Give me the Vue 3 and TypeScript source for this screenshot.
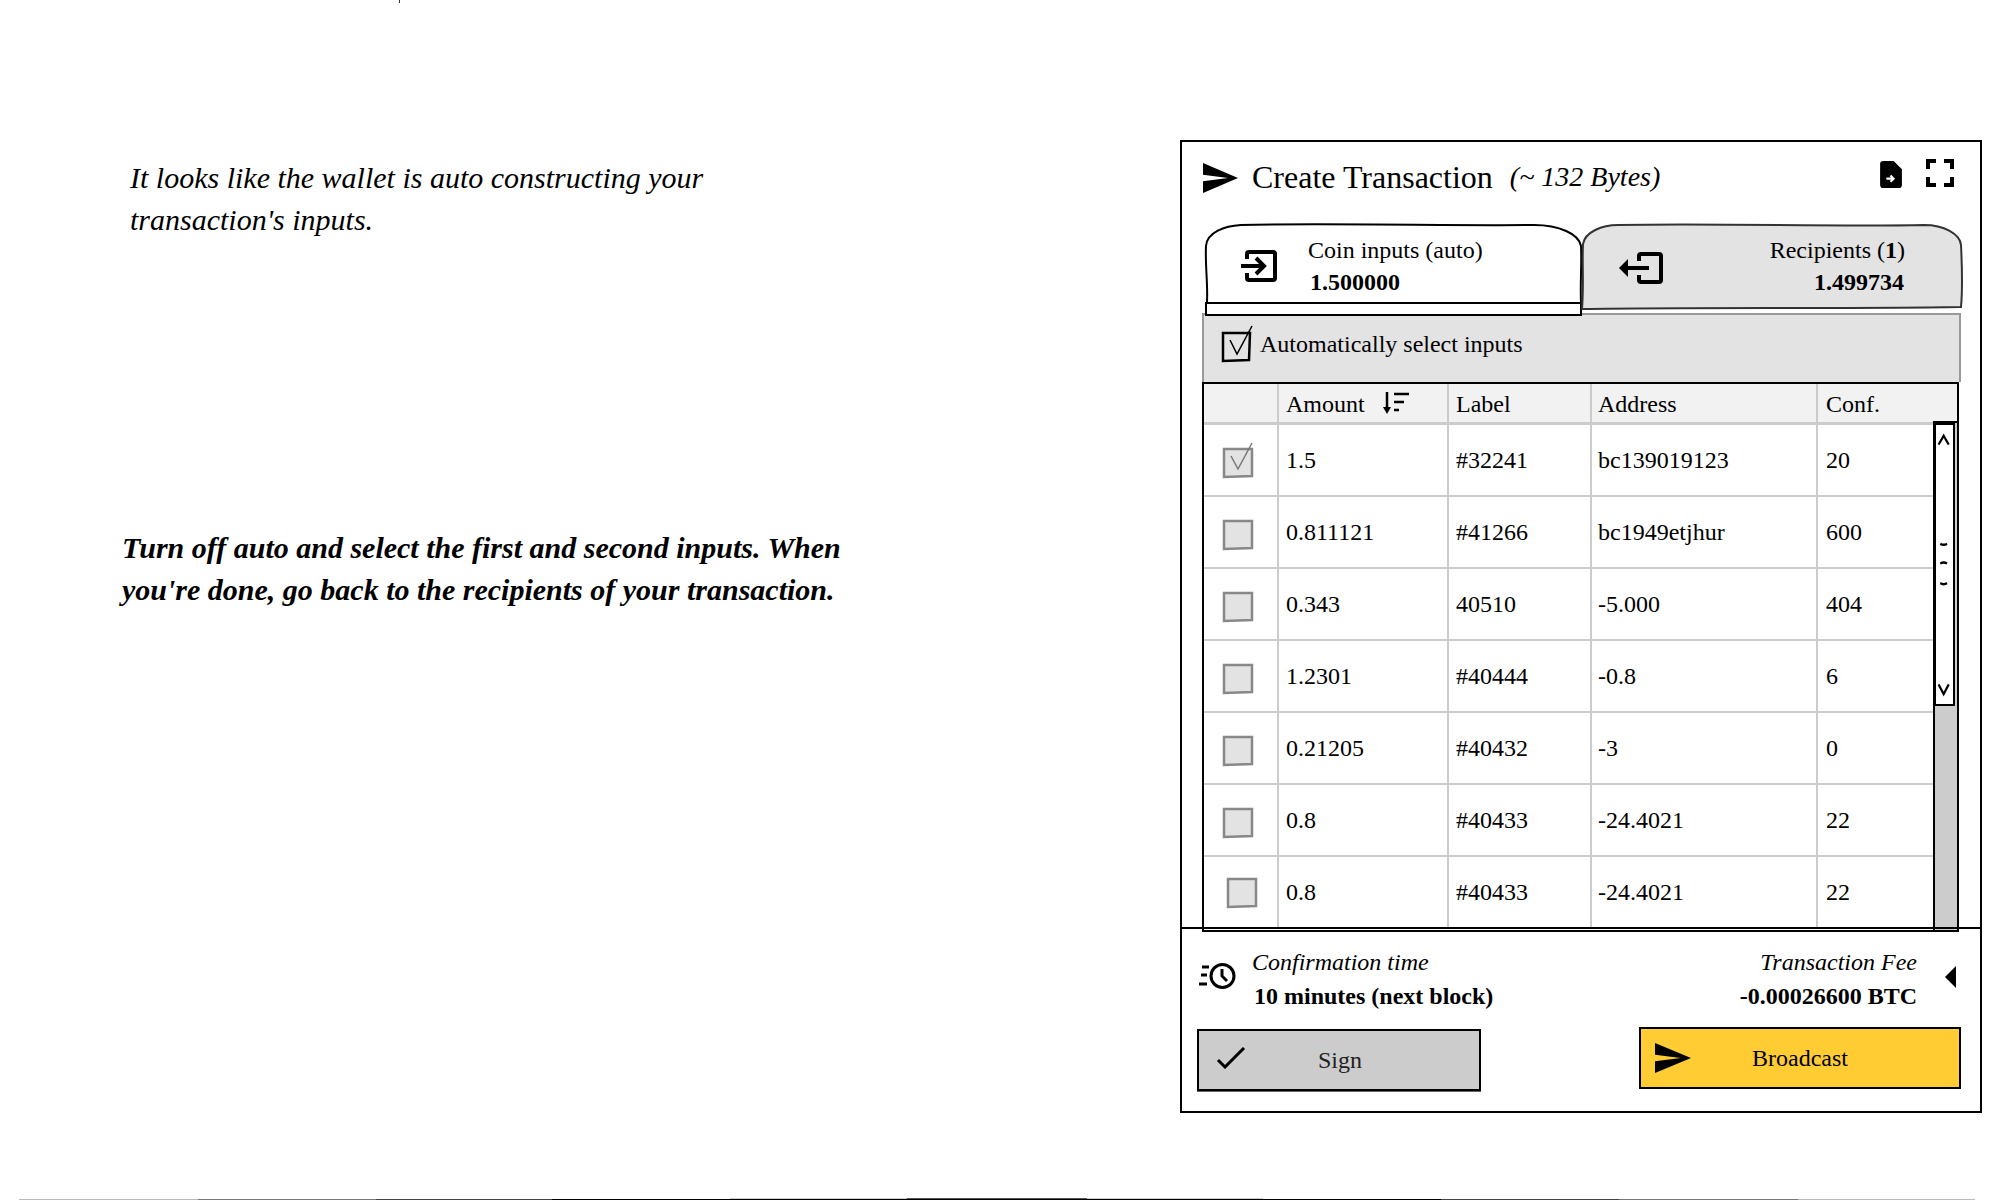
<script setup lang="ts">
interface CoinRow {
  amount: string;
  label: string;
  address: string;
  conf: string;
}

const rows: CoinRow[] = [
  { amount: "1.5", label: "#32241", address: "bc139019123", conf: "20" },
  { amount: "0.811121", label: "#41266", address: "bc1949etjhur", conf: "600" },
  { amount: "0.343", label: "40510", address: "-5.000", conf: "404" },
  { amount: "1.2301", label: "#40444", address: "-0.8", conf: "6" },
  { amount: "0.21205", label: "#40432", address: "-3", conf: "0" },
  { amount: "0.8", label: "#40433", address: "-24.4021", conf: "22" },
  { amount: "0.8", label: "#40433", address: "-24.4021", conf: "22" },
];

const sendPath = "M2.01 21L23 12 2.01 3 2 10l15 2-15 2z";
</script>

<template>
  <div class="page">
    <div class="tick"></div>
    <main class="main">
      <section class="story">
        <p class="intro">It looks like the wallet is auto constructing your<br />transaction's inputs.</p>
        <p class="task">Turn off auto and select the first and second inputs. When<br />you're done, go back to the recipients of your transaction.</p>
      </section>

      <section class="panel">
        <header class="head">
          <svg class="send-big" viewBox="2 3 21 18" preserveAspectRatio="none"><path :d="sendPath" /></svg>
          <h1 class="title">Create Transaction</h1>
          <span class="bytes">(~ 132 Bytes)</span>
          <svg class="file" viewBox="0 0 21 26">
            <path d="M3 0h10l8 8v15a3 3 0 0 1-3 3H3a3 3 0 0 1-3-3V3a3 3 0 0 1 3-3z" />
            <path class="file-arrow" d="M6 17h6M10 14l3 3-3 3" />
          </svg>
          <svg class="full" viewBox="5 5 14 14" preserveAspectRatio="none">
            <path d="M7 14H5v5h5v-2H7v-3zm-2-4h2V7h3V5H5v5zm12 7h-3v2h5v-5h-2v3zM14 5v2h3v3h2V5h-5z" />
          </svg>
        </header>

        <div class="tabs">
          <div class="tab tab-on">
            <svg class="tab-shape" viewBox="0 0 378 80" preserveAspectRatio="none">
              <path d="M2 78C3 60 0 40 1 22 2 8 20 2 36 1 120-1 260 2 330 1c25 0 45 9 47 21 1 18-1 38 0 56" />
            </svg>
            <div class="tab-strip"></div>
            <svg class="tab-icon icon-in" viewBox="0 0 36 32">
              <path d="M6 9V4q0-2 2-2h24q2 0 2 2v24q0 2-2 2H8q-2 0-2-2v-5" />
              <path d="M0 16h22M15 8l8 8-8 8" />
            </svg>
            <div class="tab-text">
              <div>Coin inputs (auto)</div>
              <strong class="coin-total">1.500000</strong>
            </div>
          </div>
          <div class="tab tab-off">
            <svg class="tab-shape" viewBox="0 0 381 85" preserveAspectRatio="none">
              <path d="M0 85C2 60 0 40 1 20 3 8 20 1 36 1c100-2 220 2 306 0 20 0 36 9 37 20 1 20 2 40 0 62-120 2-260 0-379 2z" />
            </svg>
            <svg class="tab-icon icon-out" viewBox="0 0 44 32">
              <path d="M20 9V4q0-2 2-2h18q2 0 2 2v24q0 2-2 2H22q-2 0-2-2v-5" />
              <path d="M30 16H6" />
              <path class="solid" d="M0 16l9-9v18z" />
            </svg>
            <div class="tab-text tab-text-right">
              <div>Recipients (<b>1</b>)</div>
              <strong class="recipient-total">1.499734</strong>
            </div>
          </div>
        </div>

        <div class="auto">
          <svg class="auto-check" viewBox="0 0 32 38">
            <path class="box" d="M2 8h27l-1 27-26 1z" />
            <path class="mark" d="M9 15l7 14 15-28" />
          </svg>
          <span>Automatically select inputs</span>
        </div>

        <div class="table">
          <div class="row row-head">
            <div class="cell"></div>
            <div class="cell">
              Amount
              <svg class="sort" viewBox="0 0 26 22">
                <path d="M4 0v18" />
                <path class="solid" d="M0 15h8l-4 7z" />
                <path d="M11 2h15M11 10h10M11 18h5" />
              </svg>
            </div>
            <div class="cell">Label</div>
            <div class="cell">Address</div>
            <div class="cell">Conf.</div>
          </div>
          <div v-for="(row, i) in rows" :key="i" class="row">
            <div class="cell" :class="{ 'cell-shift': i === 6 }">
              <svg class="tick-box" viewBox="0 0 30 42">
                <path class="tick-fill" d="M1 13h28l0 27-28 1z" />
                <path v-if="i === 0" class="tick-mark" d="M8 20l7 13 14-26" />
              </svg>
            </div>
            <div class="cell">{{ row.amount }}</div>
            <div class="cell">{{ row.label }}</div>
            <div class="cell">{{ row.address }}</div>
            <div class="cell">{{ row.conf }}</div>
          </div>
          <div class="track">
            <div class="thumb">
              <svg class="thumb-art" viewBox="0 0 20 284" preserveAspectRatio="none">
                <path d="M3 20l6-9 6 9M3 264l6 10 6-10" />
                <path d="M5 121q4 2 8 0M5 141q4-2 8 0M5 161q4 2 8 0" />
              </svg>
            </div>
          </div>
        </div>

        <footer class="foot">
          <div class="foot-info">
            <svg class="clock" viewBox="0 0 37 26">
              <circle cx="23.5" cy="13" r="11.5" />
              <path d="M23 6v7l5 5M3 4h7M2 12h6M0 21h8" />
            </svg>
            <div class="foot-text">
              <em>Confirmation time</em>
              <strong>10 minutes (next block)</strong>
            </div>
            <div class="foot-text foot-fee">
              <em>Transaction Fee</em>
              <strong>-0.00026600 BTC</strong>
            </div>
            <div class="collapse"></div>
          </div>
          <div class="actions">
            <button class="btn btn-sign" type="button">
              <svg class="btn-check" viewBox="0 0 30 22"><path d="M2 13l7 7L28 1" /></svg>
              Sign
            </button>
            <button class="btn btn-send" type="button">
              <svg class="btn-plane" viewBox="2 3 21 18" preserveAspectRatio="none"><path :d="sendPath" /></svg>
              Broadcast
            </button>
          </div>
        </footer>
      </section>
    </main>
    <div class="rule"></div>
  </div>
</template>

<style>
html,
body {
  margin: 0;
  background: #fff;
}
</style>

<style scoped>
.page {
  position: relative;
  height: 1200px;
  width: 2000px;
  overflow: hidden;
  display: flex;
  flex-direction: column;
  font-family: "Liberation Serif", "Times New Roman", serif;
  font-size: 24px;
  color: #000;
}
.tick {
  width: 1px;
  height: 3px;
  margin-left: 399px;
  background: #333;
  flex: none;
}
.main {
  flex: 1;
  display: flex;
  padding-top: 137px;
}
.story {
  width: 1180px;
  flex: none;
  padding-left: 122px;
  box-sizing: border-box;
  font-size: 30px;
  line-height: 42px;
  font-style: italic;
}
.story p {
  margin: 0;
}
.intro {
  padding: 17px 0 0 8px;
}
.task {
  margin-top: 285.5px !important;
  font-weight: 700;
}
.panel {
  width: 802px;
  height: 973px;
  box-sizing: border-box;
  border: 2px solid #000;
  display: flex;
  flex-direction: column;
}
.head {
  height: 82px;
  flex: none;
  display: flex;
  align-items: center;
  padding: 0 26px 20px 21px;
  box-sizing: border-box;
}
.send-big {
  width: 35px;
  height: 30px;
  margin-top: 10px;
  flex: none;
}
.title {
  margin: 8px 0 0 14px;
  font-size: 32px;
  font-weight: 400;
  line-height: 40px;
}
.bytes {
  margin: 8px 0 0 17px;
  font-size: 28px;
  font-style: italic;
}
.file {
  width: 22px;
  height: 27px;
  margin: 2px 0 0 auto;
  flex: none;
}
.file-arrow {
  fill: none;
  stroke: #fff;
  stroke-width: 2;
}
.full {
  width: 28px;
  height: 28px;
  margin-left: 24px;
  flex: none;
}
.tabs {
  height: 89px;
  flex: none;
  display: flex;
  padding-left: 23px;
  position: relative;
  z-index: 1;
}
.tab {
  position: relative;
  display: flex;
  height: 100%;
  flex: none;
}
.tab-on {
  width: 377px;
}
.tab-off {
  width: 381px;
}
.tab-shape {
  position: absolute;
  left: 0;
  top: 0;
  width: 100%;
  overflow: visible;
}
.tab-on .tab-shape {
  height: 80px;
  fill: #fff;
  stroke: #000;
  stroke-width: 2;
}
.tab-off .tab-shape {
  height: 85px;
  fill: #e3e3e3;
  stroke: #333;
  stroke-width: 2;
}
.tab-strip {
  position: absolute;
  left: 0;
  top: 78px;
  width: 100%;
  height: 14px;
  box-sizing: border-box;
  border: 2px solid #000;
  background: #fff;
}
.tab-icon {
  position: relative;
  height: 32px;
  fill: none;
  stroke: #000;
  stroke-width: 4;
  flex: none;
}
.solid {
  fill: #000;
  stroke: none;
}
.icon-in {
  width: 36px;
  margin: 26px 0 0 36px;
}
.icon-out {
  width: 44px;
  margin: 28px 0 0 37px;
}
.tab-text {
  position: relative;
  margin: 10px 0 0 31px;
  line-height: 32px;
  font-size: 24px;
}
.coin-total {
  display: block;
  padding-left: 2px;
}
.tab-text-right {
  margin-left: auto;
  margin-right: 58px;
  text-align: right;
}
.recipient-total {
  display: block;
  padding-right: 1px;
}
.auto {
  height: 69px;
  flex: none;
  margin: 0 19px 0 20px;
  box-sizing: border-box;
  background: #e3e3e3;
  border: 2px solid #999;
  border-bottom: 0;
  display: flex;
  align-items: flex-start;
  padding: 10px 0 0 17px;
}
.auto-check {
  width: 32px;
  height: 38px;
  margin-right: 7px;
  fill: none;
  stroke: #000;
}
.auto span {
  line-height: 38px;
}
.box {
  stroke-width: 2.5;
}
.mark {
  stroke-width: 1.5;
}
.table {
  position: relative;
  height: 550px;
  flex: none;
  margin: 0 21px 0 20px;
  box-sizing: border-box;
  border: 2px solid #000;
  background: #fff;
  overflow: hidden;
}
.row {
  display: grid;
  grid-template-columns: 75px 170px 143px 226px 1fr;
  height: 72px;
  box-sizing: border-box;
  border-bottom: 2px solid #ccc;
}
.row-head {
  height: 41px;
  background: #f2f2f2;
  border-bottom: 3px solid #ccc;
}
.row:nth-last-child(2) {
  height: 74px;
  padding-bottom: 4px;
  border-bottom: 0;
}
.cell {
  display: flex;
  align-items: center;
  padding-left: 7px;
  box-sizing: border-box;
  border-right: 2px solid #ccc;
  line-height: 1;
}
.cell:nth-child(4) {
  padding-left: 6px;
}
.cell:nth-child(5) {
  padding-left: 8px;
}
.row-head .cell {
  padding-top: 2px;
}
.cell:last-child {
  border-right: 0;
}
.tick-box {
  width: 30px;
  height: 42px;
  margin: -6px 0 0 12px;
  flex: none;
  overflow: visible;
}
.cell-shift .tick-box {
  margin: -10px 0 0 16px;
}
.tick-fill {
  fill: #e3e3e3;
  stroke: #888;
  stroke-width: 2.5;
}
.tick-mark {
  fill: none;
  stroke: #777;
  stroke-width: 1.5;
}
.sort {
  width: 26px;
  height: 22px;
  margin: -3px 0 0 18px;
  fill: none;
  stroke: #000;
  stroke-width: 2.5;
  flex: none;
}
.track {
  position: absolute;
  top: 37px;
  right: 0;
  bottom: 0;
  width: 24px;
  box-sizing: border-box;
  background: #ccc;
  border-left: 2px solid #000;
  border-top: 2px solid #000;
}
.thumb {
  height: 283px;
  width: 21px;
  margin-left: -1px;
  box-sizing: border-box;
  border: 2px solid #000;
  background: #fff;
}
.thumb-art {
  display: block;
  width: 100%;
  height: 100%;
  fill: none;
  stroke: #000;
  stroke-width: 2.5;
}
.foot {
  margin-top: -5px;
  border-top: 2px solid #000;
  position: relative;
  padding: 16px 19px 0 15px;
  display: flex;
  flex-direction: column;
}
.foot-info {
  display: flex;
  align-items: flex-start;
  height: 68px;
}
.clock {
  width: 37px;
  height: 26px;
  margin: 18px 16px 0 2px;
  fill: none;
  stroke: #000;
  stroke-width: 3;
  flex: none;
}
.foot-text {
  display: flex;
  flex-direction: column;
  line-height: 34px;
}
.foot-text em {
  font-style: italic;
}
.foot-text strong {
  padding-left: 2px;
}
.foot-fee {
  margin-left: auto;
  text-align: right;
}
.collapse {
  width: 0;
  height: 0;
  margin: 21px 5px 0 28px;
  border-top: 11px solid transparent;
  border-bottom: 11px solid transparent;
  border-right: 11px solid #000;
}
.actions {
  display: flex;
  justify-content: space-between;
  align-items: flex-start;
  margin-top: 14px;
}
.btn {
  position: relative;
  display: flex;
  align-items: center;
  justify-content: center;
  box-sizing: border-box;
  border: 2px solid #000;
  padding: 0;
  font: inherit;
  color: #222;
}
.btn-sign {
  width: 284px;
  height: 62px;
  margin-top: 2px;
  padding-left: 2px;
  background: #ccc;
  box-shadow: 0 1px 0 #666;
}
.btn-send {
  width: 322px;
  height: 62px;
  background: #ffcc33;
  color: #000;
}
.btn-check {
  position: absolute;
  left: 17px;
  top: 16px;
  width: 30px;
  height: 22px;
  fill: none;
  stroke: #000;
  stroke-width: 3;
}
.btn-plane {
  position: absolute;
  left: 14px;
  top: 14px;
  width: 36px;
  height: 30px;
}
.rule {
  height: 2px;
  margin: 0 25px 0 19px;
  flex: none;
  background:
    linear-gradient(
        to right,
        transparent 0 36.35%,
        #ccc 36.35% 45.4%,
        #555 45.4% 54.6%,
        #ccc 54.6% 63.6%,
        transparent 63.6%
      )
      top / 100% 1px no-repeat,
    linear-gradient(
        to right,
        #bbb 0 9.15%,
        #777 9.15% 18.25%,
        #444 18.25% 27.25%,
        #000 27.25% 72.7%,
        #444 72.7% 81.8%,
        #777 81.8% 90.95%,
        #bbb 90.95%
      )
      bottom / 100% 1px no-repeat;
}
</style>
